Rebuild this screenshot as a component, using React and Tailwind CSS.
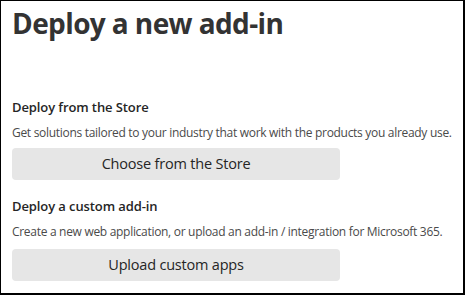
import React from 'react';

const FONT = { fontFamily: '"Open Sans", "Noto Sans", sans-serif' };

const Section = ({ title, text, button, className, gap }) => (
  <div className={className}>
    <h2 className="text-[13px] leading-5 font-semibold text-[#252525] tracking-[-0.1px]">{title}</h2>
    <p className="mt-[6px] text-[12px] leading-5 text-[#4a4a4a] whitespace-nowrap tracking-[-0.3px]">{text}</p>
    <button className={`${gap} w-[328px] h-8 rounded-sm bg-[#e6e6e6] text-[14.5px] text-[#252525] tracking-[-0.2px]`}>
      {button}
    </button>
  </div>
);

export default function App() {
  return (
    <div
      className="w-[465px] h-[295px] bg-white border-t border-l border-r-2 border-b-2 border-black overflow-hidden px-[11px]"
      style={FONT}
    >
      <h1 className="mt-[4px] text-[28px] leading-9 font-bold text-[#333333] tracking-[-0.6px]">
        Deploy a new add-in
      </h1>
      {/* store */}
      <Section
        className="mt-[56px]"
        gap="mt-[5px]"
        title="Deploy from the Store"
        text="Get solutions tailored to your industry that work with the products you already use."
        button="Choose from the Store"
      />
      {/* custom */}
      <Section
        className="mt-[16px]"
        gap="mt-[7px]"
        title="Deploy a custom add-in"
        text="Create a new web application, or upload an add-in / integration for Microsoft 365."
        button="Upload custom apps"
      />
    </div>
  );
}
